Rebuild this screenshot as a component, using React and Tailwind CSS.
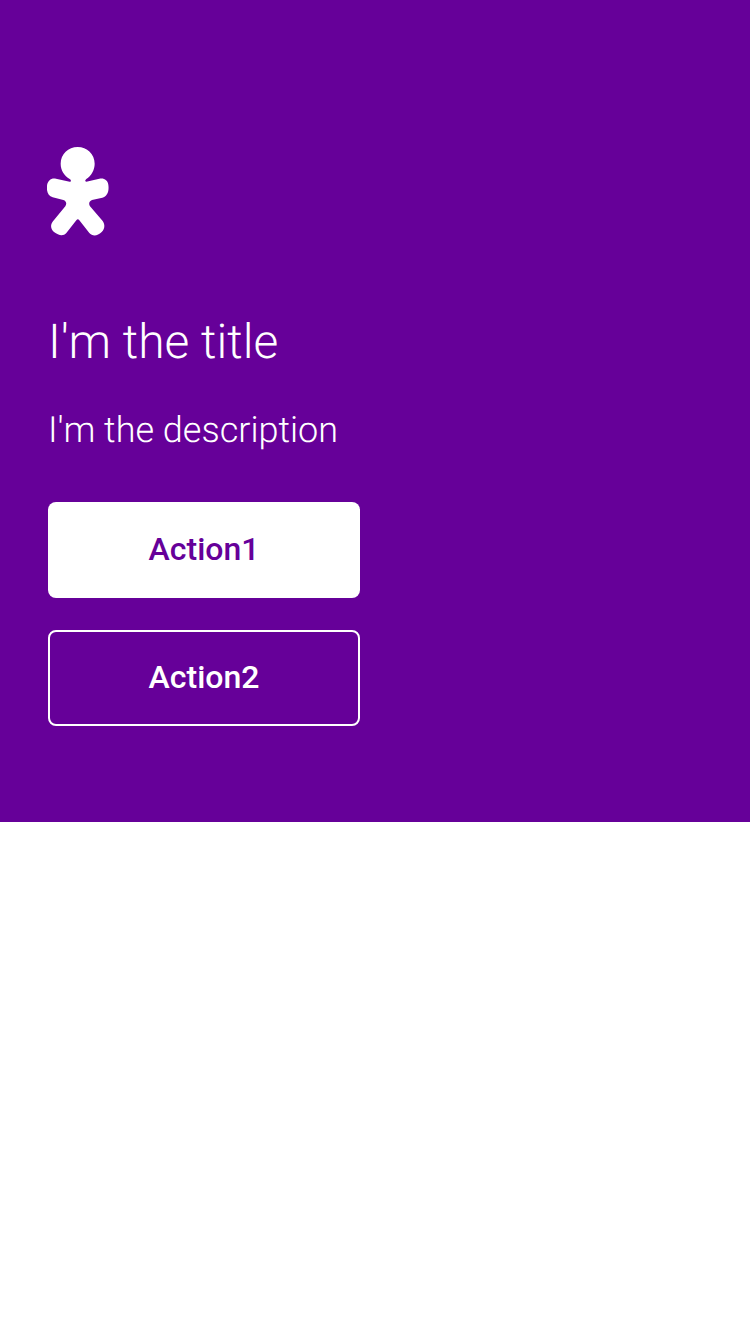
function PersonLogo() {
  return (
    <svg className="-ml-px block h-[89px] w-[62px]" viewBox="33 33 186 267" fill="#fff" aria-hidden="true">
      <path d="M125 33C153 33 176 55 176 83C176 102 166 119 151 129C147 132 146 137 151 137L190 128C204 125 215 132 217 146C220 167 213 181 199 185L168 192C160 195 157 203 162 211L200 255C208 266 206 279 197 288C184 301 169 301 160 291L130 253Q125.500 246 121 253L91 291C82 301 68 299 54 288C44 280 42 267 51 256L88 211C93 203 91 195 82 192L50 184C37 180 31 168 33 149C35 133 46 125 60 128L101 137C106 137 106 132 101 129C85 119 74 103 74 83C74 55 97 33 125 33Z" />
    </svg>
  );
}

export default function App() {
  return (
    <main className="min-h-screen bg-white font-['Roboto',sans-serif] antialiased [text-rendering:geometricPrecision]">
      <section className="flex h-[822px] flex-col items-start bg-[#660099] px-12 pt-[147px] text-white">
        <PersonLogo />
        <h1 className="mt-[78px] text-[48px] leading-[56px] font-light">I'm the title</h1>
        <p className="mt-9 text-[36px] leading-[48px] font-light">I'm the description</p>
        <div className="mt-12 flex w-[312px] flex-col gap-8">
          <button className="h-24 rounded-lg bg-white pb-0.5 text-[32px] leading-[48px] font-medium text-[#660099]">
            Action1
          </button>
          <button className="h-24 rounded-lg border-2 border-white pb-0.5 text-[32px] leading-[48px] font-medium text-white">
            Action2
          </button>
        </div>
      </section>
    </main>
  );
}
